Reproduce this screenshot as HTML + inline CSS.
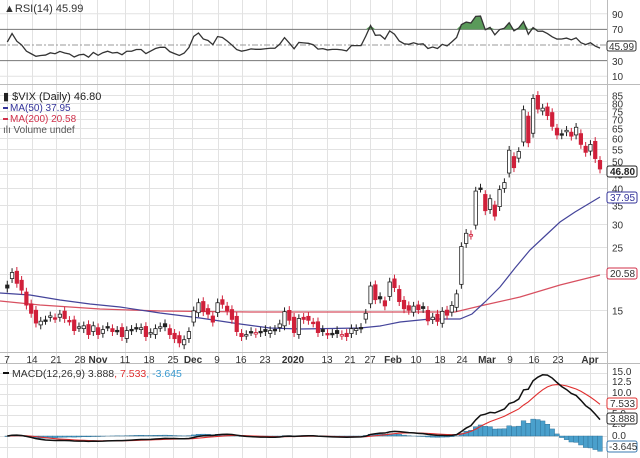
<!DOCTYPE html>
<html><head><meta charset="utf-8"><style>
html,body{margin:0;padding:0;background:#fff;}
svg{display:block;font-family:"Liberation Sans",Arial,sans-serif;}
</style></head><body>
<svg id="c" width="640" height="458" xmlns="http://www.w3.org/2000/svg">
<rect width="640" height="458" fill="#fff"/>
<g id="grid" stroke="#e2e2e2" stroke-width="1"></g>
<g id="plots"></g>
<!-- frames -->
<g stroke="#bbb" fill="none">
<line x1="607.5" y1="0" x2="607.5" y2="458"/>
<line x1="0" y1="84.5" x2="640" y2="84.5"/>
<line x1="0" y1="352.5" x2="607" y2="352.5"/>
<line x1="0" y1="363.5" x2="640" y2="363.5"/>
</g>
<!-- RSI labels -->
<g font-size="10" fill="#333">
<text x="4" y="12" font-size="11">▲RSI(14) 45.99</text>
<text x="612" y="18">90</text>
<text x="612" y="33">70</text>
<text x="612" y="65">30</text>
<text x="612" y="80">10</text>
</g>
<rect x="607" y="41" width="29" height="10" fill="#fff" stroke="#333" rx="2"/>
<text x="609" y="50" font-size="10" fill="#333">45.99</text>
<!-- main legend -->
<g font-size="10">
<text x="3" y="100" font-size="11" fill="#222">▮ $VIX (Daily) 46.80</text>
<line x1="3" y1="108" x2="8" y2="108" stroke="#33339a" stroke-width="2"/>
<text x="10" y="111" fill="#33339a">MA(50) 37.95</text>
<line x1="3" y1="119" x2="8" y2="119" stroke="#d0304a" stroke-width="2"/>
<text x="10" y="122" fill="#d0304a">MA(200) 20.58</text>
<text x="3" y="133" fill="#555">ılı Volume undef</text>
</g>
<g id="paxis" font-size="10" fill="#333"></g>
<rect x="607" y="166" width="30" height="11" fill="#fff" stroke="#222" rx="2"/>
<text x="610" y="175" font-size="10" font-weight="bold" fill="#222">46.80</text>
<rect x="607" y="192" width="30" height="11" fill="#fff" stroke="#33339a" rx="2"/>
<text x="610" y="201" font-size="10" fill="#33339a">37.95</text>
<rect x="607" y="268" width="30" height="11" fill="#fff" stroke="#d0304a" rx="2"/>
<text x="610" y="277" font-size="10" fill="#333">20.58</text>
<!-- dates -->
<g font-size="10" fill="#333" text-anchor="middle">
<text x="7" y="363">7</text><text x="32" y="363">14</text><text x="56" y="363">21</text><text x="80" y="363">28</text>
<text x="98" y="363" font-weight="bold">Nov</text><text x="125" y="363">11</text><text x="149" y="363">18</text><text x="173" y="363">25</text>
<text x="193" y="363" font-weight="bold">Dec</text><text x="217" y="363">9</text><text x="241" y="363">16</text><text x="265" y="363">23</text>
<text x="293" y="363" font-weight="bold">2020</text><text x="327" y="363">13</text><text x="350" y="363">21</text><text x="370" y="363">27</text>
<text x="393" y="363" font-weight="bold">Feb</text><text x="416" y="363">10</text><text x="440" y="363">18</text><text x="462" y="363">24</text>
<text x="487" y="363" font-weight="bold">Mar</text><text x="510" y="363">9</text><text x="534" y="363">16</text><text x="558" y="363">23</text>
<text x="590" y="363" font-weight="bold">Apr</text>
</g>
<!-- MACD -->
<g font-size="10.5">
<line x1="3" y1="373" x2="9" y2="373" stroke="#111" stroke-width="2"/>
<text x="12" y="377" fill="#333">MACD(12,26,9) 3.888<tspan fill="#e03030">, 7.533</tspan><tspan fill="#3a9ad0">, -3.645</tspan></text>
</g>
<g font-size="10" fill="#333">
<text x="612" y="375">15.0</text><text x="612" y="385">12.5</text><text x="612" y="396">10.0</text>
<text x="612" y="417">5.0</text><text x="612" y="427">2.5</text><text x="612" y="439">0.0</text>
</g>
<rect x="607" y="398" width="30" height="11" fill="#fff" stroke="#e03030" rx="2"/>
<text x="610" y="407" font-size="10" fill="#333">7.533</text>
<rect x="607" y="413" width="30" height="11" fill="#fff" stroke="#222" rx="2"/>
<text x="610" y="422" font-size="10" fill="#333">3.888</text>
<rect x="607" y="441" width="30" height="11" fill="#fff" stroke="#3a7ab0" rx="2"/>
<text x="609" y="450" font-size="10" fill="#333">-3.645</text>
</svg>
<script>
var C=[17.9,20.3,18.6,17.6,15.6,14.6,13.5,13.7,13.8,14.3,14.0,14.5,14.0,13.7,12.7,13.1,13.2,12.3,13.2,12.3,12.8,13.1,12.6,12.7,12.1,12.7,12.7,13.0,13.0,12.1,12.5,12.9,13.1,13.1,12.3,11.9,11.5,11.8,12.6,14.9,15.9,14.8,14.5,13.6,15.9,15.7,14.9,13.9,12.6,12.1,12.3,12.6,12.5,12.5,12.6,12.7,12.7,13.4,14.8,13.8,12.5,14.0,13.9,13.8,13.5,12.5,12.6,12.3,12.4,12.4,12.3,12.1,12.9,12.9,12.9,14.6,18.2,16.3,16.4,15.5,18.8,17.97,16.05,15.15,14.96,15.47,15.04,15.18,13.74,14.15,13.68,14.83,14.38,15.56,17.08,25.03,27.85,27.56,39.16,40.11,33.42,36.82,31.99,39.62,41.94,54.46,47.3,53.9,75.47,57.83,82.69,75.91,76.45,72.0,66.04,61.59,61.67,63.95,61.0,65.54,57.08,53.54,57.06,50.91,46.8];
var N=C.length,NS="http://www.w3.org/2000/svg";
function X(i){return 600-(N-1-i)*4.78;}
function PY(p){return 645.5-123.9*Math.log(p);}
function RY(v){return 84-0.78*v;}
function MY(v){return 436-4.2*v;}
var svg=document.getElementById('c'),G=document.getElementById('grid'),P=document.getElementById('plots');
function el(t,a,par){var e=document.createElementNS(NS,t);for(var k in a)e.setAttribute(k,a[k]);(par||P).appendChild(e);return e;}
// grid
[7,32,56,80,97,125,149,173,192,218,242,266,292,327,350,370,392,416,440,462,486,510,534,558,590].forEach(function(x){el('line',{x1:x+.5,y1:0,x2:x+.5,y2:458},G);});
[90,10].forEach(function(v){el('line',{x1:0,y1:RY(v),x2:607,y2:RY(v)},G);});
var lv=[85,80,75,70,65,60,55,50,45,40,35,30,25,20,15];
lv.forEach(function(v){var y=Math.round(PY(v))+.5;el('line',{x1:0,y1:y,x2:607,y2:y},G);
 if(v!=20)el('text',{x:612,y:y+4,'font-size':10,fill:'#333'},document.getElementById('paxis')).textContent=v;});
[15,12.5,10,7.5,5,2.5,0,-2.5].forEach(function(v){var y=Math.round(MY(v))+.5;el('line',{x1:0,y1:y,x2:607,y2:y},G);});
// RSI lines
el('line',{x1:0,y1:RY(70),x2:607,y2:RY(70),stroke:'#777'});
el('line',{x1:0,y1:RY(30),x2:607,y2:RY(30),stroke:'#777'});
el('line',{x1:0,y1:RY(50),x2:607,y2:RY(50),stroke:'#999','stroke-dasharray':'6,2,2,2'});
// RSI compute
var ag=0.35,al=0.3,rsi=[];
for(var i=0;i<N;i++){var d=i?C[i]-C[i-1]:0;ag=(ag*13+Math.max(d,0))/14;al=(al*13+Math.max(-d,0))/14;rsi.push(100-100/(1+ag/al));}
var pts=rsi.map(function(r,i){return X(i)+','+RY(r);}).join(' ');
// green fill above 70
var gp='M'+X(0)+','+RY(70);rsi.forEach(function(r,i){gp+=' L'+X(i)+','+RY(Math.max(r,70));});gp+=' L'+X(N-1)+','+RY(70)+'Z';
el('path',{d:gp,fill:'#5a9a5a'});
el('polyline',{points:pts,fill:'none',stroke:'#333','stroke-width':1.3});
// MA lines
el('polyline',{points:'0,301 40,305 100,309 160,311 250,312 300,312 400,312 455,312 480,306 520,297 560,285 600,275',fill:'none',stroke:'#d85060','stroke-width':1.2});
el('polyline',{points:'0,293 30,295 60,300 90,304 120,307 160,313 200,318 240,324 270,328 300,329 360,328 380,326 400,322 430,319 460,319 472,314 485,302 500,287 515,268 530,250 545,236 560,222 575,212 590,203 600,197',fill:'none',stroke:'#44449a','stroke-width':1.2});
// candles
for(var i=0;i<N;i++){
 var c=C[i],pc=i?C[i-1]:c,o=i%3==0?pc*1.025:(i%3==1?pc*0.985:pc*1.01);
 if(i>0&&Math.abs(c-pc)/pc>0.12)o=pc*(c>pc?1.08:0.95);
 var hi=Math.max(o,c)*1.035,lo=Math.min(o,c)*0.965;
 var col=c<pc?'#d0203a':'#222',x=X(i);
 el('line',{x1:x,y1:PY(hi),x2:x,y2:PY(lo),stroke:col,'stroke-width':1});
 var t=PY(Math.max(o,c)),b=PY(Math.min(o,c));if(b-t<1.5)b=t+1.5;
 el('rect',{x:x-1.7,y:t,width:3.4,height:b-t,fill:c>o?'#fff':col,stroke:col,'stroke-width':0.8});
}
// MACD
var e12=C[0],e26=C[0],sig=0,m=[],s=[];
for(var i=0;i<N;i++){e12+=(C[i]-e12)*2/13;e26+=(C[i]-e26)*2/27;var mv=e12-e26;sig+=(mv-sig)*2/10;m.push(mv);s.push(sig);}
for(var i=0;i<N;i++){var h=m[i]-s[i];var y0=MY(0),y1=MY(h);
 el('rect',{x:X(i)-2.4,y:Math.min(y0,y1),width:4.8,height:Math.abs(y1-y0)||0.5,fill:'#4aa0cc',stroke:'#2a6a90','stroke-width':0.4});}
el('polyline',{points:s.map(function(v,i){return X(i)+','+MY(v);}).join(' '),fill:'none',stroke:'#e03030','stroke-width':1.1});
el('polyline',{points:m.map(function(v,i){return X(i)+','+MY(v);}).join(' '),fill:'none',stroke:'#111','stroke-width':1.5});
// bring labels above
</script>
</body></html>
